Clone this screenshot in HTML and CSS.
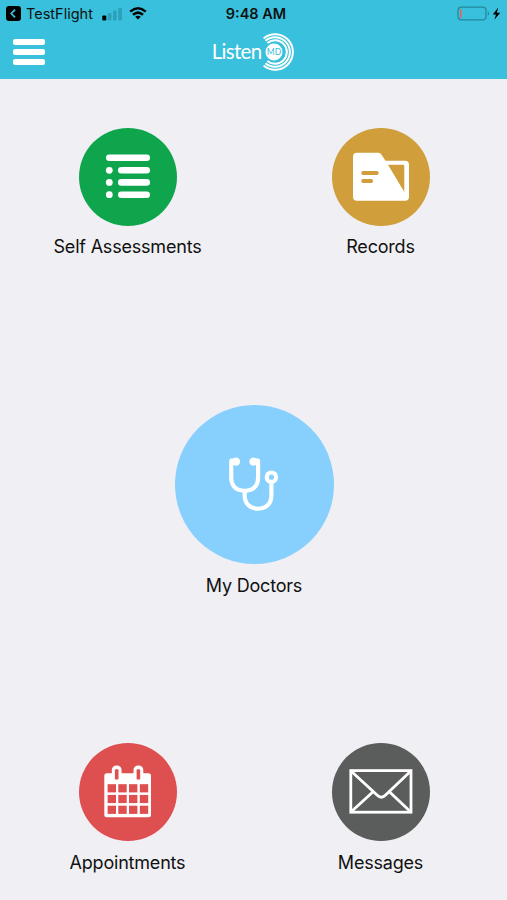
FILE: index.html
```html
<!DOCTYPE html>
<html lang="en">
<head>
  <meta charset="UTF-8">
  <title>ListenMD</title>
  <link rel="stylesheet" href="styles.css">
</head>
<body>
<header>
  <div class="status">
    <div class="status-left">
      <svg width="15" height="15" viewBox="0 0 15 15">
        <rect width="15" height="15" rx="3" fill="#000"/>
        <path d="M9 3.6 L5.3 7.5 L9 11.4" fill="none" stroke="#38c0dc" stroke-width="1.8"/>
      </svg>
      <span class="back-app">TestFlight</span>
      <svg class="signal" width="21" height="14" viewBox="0 0 21 14">
        <rect x="0.3" y="8.5" width="4" height="5" rx="1" fill="#000"/>
        <g fill="#2aa0ba">
          <rect x="5.8" y="6" width="3.6" height="7.5" rx="1"/>
          <rect x="11" y="3.5" width="3.6" height="10" rx="1"/>
          <rect x="16.3" y="1" width="3.6" height="12.5" rx="1"/>
        </g>
      </svg>
      <svg class="wifi" width="18" height="13" viewBox="0 0 18 13">
        <g fill="none" stroke="#000" stroke-width="2.5">
          <path d="M1.2 4.6 Q9 -2 16.8 4.6"/>
          <path d="M4 7.8 Q9 3.4 14 7.8"/>
        </g>
        <path d="M6.2 9.8 Q9 7.6 11.8 9.8 L9 12.6 Z"/>
      </svg>
    </div>
    <div class="time">9:48 AM</div>
    <div class="status-right">
      <svg width="45" height="16" viewBox="0 0 45 16">
        <rect x="1" y="1.2" width="28" height="12.6" rx="3.4" fill="none" stroke="#23859b" stroke-width="1.2"/>
        <rect x="2.8" y="3.2" width="1.8" height="8.6" rx="0.6" fill="#e0675e"/>
        <path d="M30.8 5 Q33.4 7.5 30.8 10 Z" fill="#23859b"/>
        <path d="M41.2 1.6 L35.8 8.4 H39 L37.4 13.8 L43.2 6.7 H39.8 Z"/>
      </svg>
    </div>
  </div>
  <div class="navbar">
    <div class="menu"><i></i><i></i><i></i></div>
    <div class="logo">
      <span class="logo-text">Listen</span>
      <svg class="logo-mark" width="36" height="40" viewBox="0 0 36 40">
        <circle cx="15" cy="20" r="8.5" fill="#fff"/>
        <g fill="none" stroke="#fff" stroke-width="2">
          <path d="M8.4 11 A11.8 11.8 0 1 1 8.4 29"/>
          <path d="M6.5 8.7 A14.8 14.8 0 1 1 6.5 31.3"/>
          <path d="M4.6 6.4 A17.8 17.8 0 1 1 4.6 33.6"/>
        </g>
        <text x="15" y="23.2" text-anchor="middle" class="logo-md">MD</text>
      </svg>
    </div>
  </div>
</header>

<main>
  <div class="row">
    <a class="tile">
      <svg class="circle green" viewBox="0 0 98 98">
        <g stroke="#fff" stroke-width="6.6" stroke-linecap="round">
          <path d="M30.3 29.8 H67.7"/>
          <path d="M42.3 42.3 H67.7"/>
          <path d="M42.3 54.4 H67.7"/>
          <path d="M42.3 66.7 H67.7"/>
        </g>
        <g fill="#fff">
          <circle cx="30.3" cy="42.3" r="3.4"/>
          <circle cx="30.3" cy="54.4" r="3.4"/>
          <circle cx="30.3" cy="66.7" r="3.4"/>
        </g>
      </svg>
      <span class="label">Self Assessments</span>
    </a>
    <a class="tile">
      <svg class="circle gold" viewBox="0 0 98 98">
        <path fill="#fff" fill-rule="evenodd" d="M25 24.7 H46.5 Q48.2 24.7 49.2 26.3 L53.5 32.7 H73 Q77 32.7 77 36.7 V68.7 Q77 72.7 73 72.7 H25 Q21 72.7 21 68.7 V28.7 Q21 24.7 25 24.7 Z M56 36.7 L72.3 64 V38 Q72.3 36.7 71 36.7 Z"/>
        <g stroke="#d09e3a" stroke-width="3.8" stroke-linecap="round">
          <path d="M31.2 45 H44.8"/>
          <path d="M31.2 53 H39.2"/>
        </g>
      </svg>
      <span class="label">Records</span>
    </a>
  </div>

  <a class="tile center">
    <svg class="circle big blue" viewBox="0 0 160 160">
      <g fill="none" stroke="#fff" stroke-width="4.2" stroke-linecap="round" stroke-linejoin="round">
        <path d="M61 56 H56.6 V73 C56.6 82 62 86.3 70.1 86.3 C78.2 86.3 83.6 82 83.6 73 V56 H79"/>
        <path d="M70.1 87 V91 C70.1 99.5 76 104.4 83.6 104.4 C91.2 104.4 97 99.5 97 91 V78"/>
        <circle cx="97" cy="72.6" r="4.7"/>
      </g>
      <circle cx="61.4" cy="57" r="4.2" fill="#fff"/>
      <circle cx="79" cy="57" r="4.2" fill="#fff"/>
    </svg>
    <span class="label">My Doctors</span>
  </a>

  <div class="row">
    <a class="tile">
      <svg class="circle red" viewBox="0 0 98 98">
        <rect x="25.3" y="30.2" width="46.7" height="44" rx="2.5" fill="#fff"/>
        <rect x="32.8" y="22.5" width="9.8" height="16" rx="4.6" fill="#fff"/>
        <rect x="54.5" y="22.5" width="9.8" height="16" rx="4.6" fill="#fff"/>
        <g fill="#de4f50">
          <rect x="35.9" y="26.2" width="3.6" height="10.4" rx="1"/>
          <rect x="57.6" y="26.2" width="3.6" height="10.4" rx="1"/>
          <rect x="28.6" y="41.2" width="8.4" height="8.2"/>
          <rect x="39.3" y="41.2" width="8.4" height="8.2"/>
          <rect x="50" y="41.2" width="8.4" height="8.2"/>
          <rect x="60.8" y="41.2" width="8.4" height="8.2"/>
          <rect x="28.6" y="51.9" width="8.4" height="8.2"/>
          <rect x="39.3" y="51.9" width="8.4" height="8.2"/>
          <rect x="50" y="51.9" width="8.4" height="8.2"/>
          <rect x="60.8" y="51.9" width="8.4" height="8.2"/>
          <rect x="28.6" y="62.7" width="8.4" height="8.2"/>
          <rect x="39.3" y="62.7" width="8.4" height="8.2"/>
          <rect x="50" y="62.7" width="8.4" height="8.2"/>
          <rect x="60.8" y="62.7" width="8.4" height="8.2"/>
        </g>
      </svg>
      <span class="label">Appointments</span>
    </a>
    <a class="tile">
      <svg class="circle grey" viewBox="0 0 98 98">
        <g fill="none" stroke="#fff" stroke-width="2.8">
          <rect x="18.8" y="27.6" width="60.2" height="41.6"/>
          <path d="M19.5 28.5 L45 52 Q49.3 56.5 53.6 52 L78.3 28.5"/>
          <path d="M19.5 68.5 L40.8 49"/>
          <path d="M78.3 68.5 L57.6 49"/>
        </g>
      </svg>
      <span class="label">Messages</span>
    </a>
  </div>
</main>
</body>
</html>
```
FILE: styles.css
```css
body {
  margin: 0;
  height: 900px;
  display: flex;
  flex-direction: column;
  background: #efeff4;
  color: #111;
  font-family: Inter, "Liberation Sans", sans-serif;
}
svg {
  display: block;
}
header {
  height: 79px;
  background: #38c0dc;
}
.status {
  display: grid;
  grid-template-columns: 1fr auto 1fr;
  align-items: center;
  height: 27px;
  padding: 0 5px 0 6px;
}
.status-left {
  display: flex;
  align-items: center;
}
.back-app {
  margin-left: 5px;
  width: 68px;
  font-size: 14.5px;
  white-space: nowrap;
}
.signal {
  margin-left: 8px;
}
.wifi {
  margin-left: 6px;
}
.time {
  font-size: 14.5px;
  font-weight: 600;
  padding-left: 4px;
}
.status-right {
  display: flex;
  justify-content: flex-end;
}
.navbar {
  display: grid;
  grid-template-columns: 1fr auto 1fr;
  align-items: center;
  height: 50px;
}
.menu {
  display: flex;
  flex-direction: column;
  gap: 4.4px;
  width: 32px;
  margin-left: 13px;
}
.menu i {
  height: 5.6px;
  border-radius: 2px;
  background: #fff;
}
.logo {
  display: flex;
  align-items: center;
  height: 40px;
  color: #fff;
}
.logo-text {
  width: 47.5px;
  margin-top: -2px;
  font: 20.5px Lato, sans-serif;
  letter-spacing: -0.7px;
}
.logo-md {
  font: 8.5px Lato, sans-serif;
  fill: #38c0dc;
}

main {
  flex: 1;
  display: flex;
  flex-direction: column;
  justify-content: space-between;
  padding: 49px 0 27px 1px;
}
.row {
  display: grid;
  grid-template-columns: 1fr 1fr;
}
.tile {
  display: flex;
  flex-direction: column;
  align-items: center;
}
.circle {
  width: 98px;
  height: 98px;
  border-radius: 50%;
}
.big {
  width: 159px;
  height: 159px;
}
.green { background: #0fa54c; }
.gold { background: #d09e3a; }
.blue { background: #87cffd; }
.red { background: #de4f50; }
.grey { background: #5b5d5c; }
.label {
  margin-top: 10px;
  font-size: 18px;
  line-height: 22px;
  letter-spacing: -0.2px;
  white-space: nowrap;
}
.center .label,
.row:last-child .label {
  margin-top: 11px;
}
.row:last-child {
  margin-bottom: -1px;
}
```
